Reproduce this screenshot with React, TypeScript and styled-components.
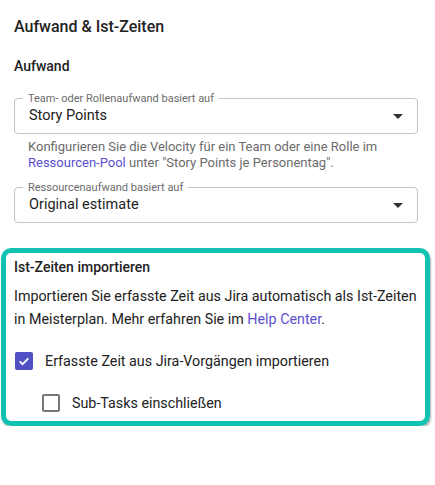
import styled, { createGlobalStyle } from 'styled-components';

const COLORS = {
  TEXT: '#222222',
  LABEL: '#6b6b6b',
  LINE: '#c4c4c4',
  LINK: '#5b4fd0',
  CHECK: '#5050c4',
  TEAL: '#12c2b1'
};

const GlobalStyle = createGlobalStyle`
  html, body {
    margin: 0;
    padding: 0;
    background: #ffffff;
    font-family: Roboto, "Noto Sans", "Liberation Sans", sans-serif;
    color: ${COLORS.TEXT};
  }
  * {
    box-sizing: border-box;
  }
`;

type SelectFieldProps = {
  label: string;
  value: string;
};

function SelectField({ label, value }: SelectFieldProps) {
  return (
    <SelectBox>
      <FloatingLabel>{label}</FloatingLabel>
      <SelectValue>{value}</SelectValue>
      <svg width="24" height="24" viewBox="0 0 24 24" aria-hidden="true">
        <path d="M7 10l5 5 5-5z" fill="#333333" />
      </svg>
    </SelectBox>
  );
}

type CheckRowProps = {
  label: string;
  checked: boolean;
  indent?: boolean;
};

function CheckRow({ label, checked, indent }: CheckRowProps) {
  return (
    <CheckLine $indent={indent}>
      <CheckBox $checked={checked}>
        {checked && (
          <svg width="14" height="14" viewBox="0 0 24 24" aria-hidden="true">
            <path
              d="M4.5 12.5l5 5 10-10"
              fill="none"
              stroke="#ffffff"
              strokeWidth="3"
            />
          </svg>
        )}
      </CheckBox>
      <span>{label}</span>
    </CheckLine>
  );
}

function App() {
  return (
    <>
      <GlobalStyle />
      <Panel>
        <Title>Aufwand &amp; Ist-Zeiten</Title>
        <SectionTitle>Aufwand</SectionTitle>
        <SelectField
          label="Team- oder Rollenaufwand basiert auf"
          value="Story Points"
        />
        <HelperText>
          Konfigurieren Sie die Velocity für ein Team oder eine Rolle im{' '}
          <TextLink href="#">Ressourcen-Pool</TextLink> unter "Story Points je
          Personentag".
        </HelperText>
        <SecondField>
          <SelectField
            label="Ressourcenaufwand basiert auf"
            value="Original estimate"
          />
        </SecondField>
      </Panel>
      <Highlight>
        <HighlightTitle>Ist-Zeiten importieren</HighlightTitle>
        <Paragraph>
          Importieren Sie erfasste Zeit aus Jira automatisch als Ist-Zeiten in
          Meisterplan. Mehr erfahren Sie im{' '}
          <TextLink href="#">Help Center</TextLink>.
        </Paragraph>
        <CheckList>
          <CheckRow
            label="Erfasste Zeit aus Jira-Vorgängen importieren"
            checked
          />
          <CheckRow label="Sub-Tasks einschließen" checked={false} indent />
        </CheckList>
      </Highlight>
    </>
  );
}

const Panel = styled.div`
  display: flex;
  flex-direction: column;
  padding: 15px 17px 0 14px;
`;

const Title = styled.h1`
  margin: 0;
  font-size: 16px;
  line-height: 24px;
  font-weight: 500;
`;

const SectionTitle = styled.h2`
  margin: 17px 0 0;
  font-size: 14px;
  line-height: 20px;
  font-weight: 500;
`;

const SelectBox = styled.div`
  position: relative;
  display: flex;
  align-items: center;
  justify-content: space-between;
  height: 36px;
  margin-top: 22px;
  padding: 0 7px 0 14px;
  border: 1px solid ${COLORS.LINE};
  border-radius: 4px;
`;

const FloatingLabel = styled.span`
  position: absolute;
  left: 8px;
  top: -7px;
  padding: 0 5px;
  background: #ffffff;
  font-size: 11px;
  line-height: 13px;
  color: ${COLORS.LABEL};
`;

const SelectValue = styled.span`
  font-size: 14.5px;
  line-height: 20px;
`;

const HelperText = styled.p`
  margin: 5px 0 0 14px;
  font-size: 13px;
  line-height: 16px;
  color: ${COLORS.LABEL};
`;

const SecondField = styled.div`
  margin-top: -6px;
`;

const TextLink = styled.a`
  color: ${COLORS.LINK};
  text-decoration: none;
`;

const Highlight = styled.section`
  display: flex;
  flex-direction: column;
  width: 429px;
  margin: 25px 0 0 1px;
  padding: 4px 6px 6px 8px;
  border: 5px solid ${COLORS.TEAL};
  border-radius: 10px;
  box-shadow: 1px 2px 2px rgba(0, 0, 0, 0.3);
`;

const HighlightTitle = styled.h3`
  margin: 0;
  font-size: 14px;
  line-height: 20px;
  font-weight: 500;
`;

const Paragraph = styled.p`
  margin: 8px 0 0;
  font-size: 14.3px;
  line-height: 23px;
`;

const CheckList = styled.div`
  display: flex;
  flex-direction: column;
  gap: 18px;
  margin-top: 18px;
`;

const CheckLine = styled.label<{ $indent?: boolean }>`
  display: flex;
  align-items: center;
  gap: 12px;
  height: 24px;
  padding-left: ${({ $indent }) => ($indent ? '28px' : '1px')};
  font-size: 14.3px;
`;

const CheckBox = styled.span<{ $checked: boolean }>`
  display: flex;
  align-items: center;
  justify-content: center;
  width: 18px;
  height: 18px;
  border-radius: 2px;
  background: ${({ $checked }) => ($checked ? COLORS.CHECK : '#ffffff')};
  border: ${({ $checked }) => ($checked ? 'none' : '2px solid #777777')};
`;

export default App;
